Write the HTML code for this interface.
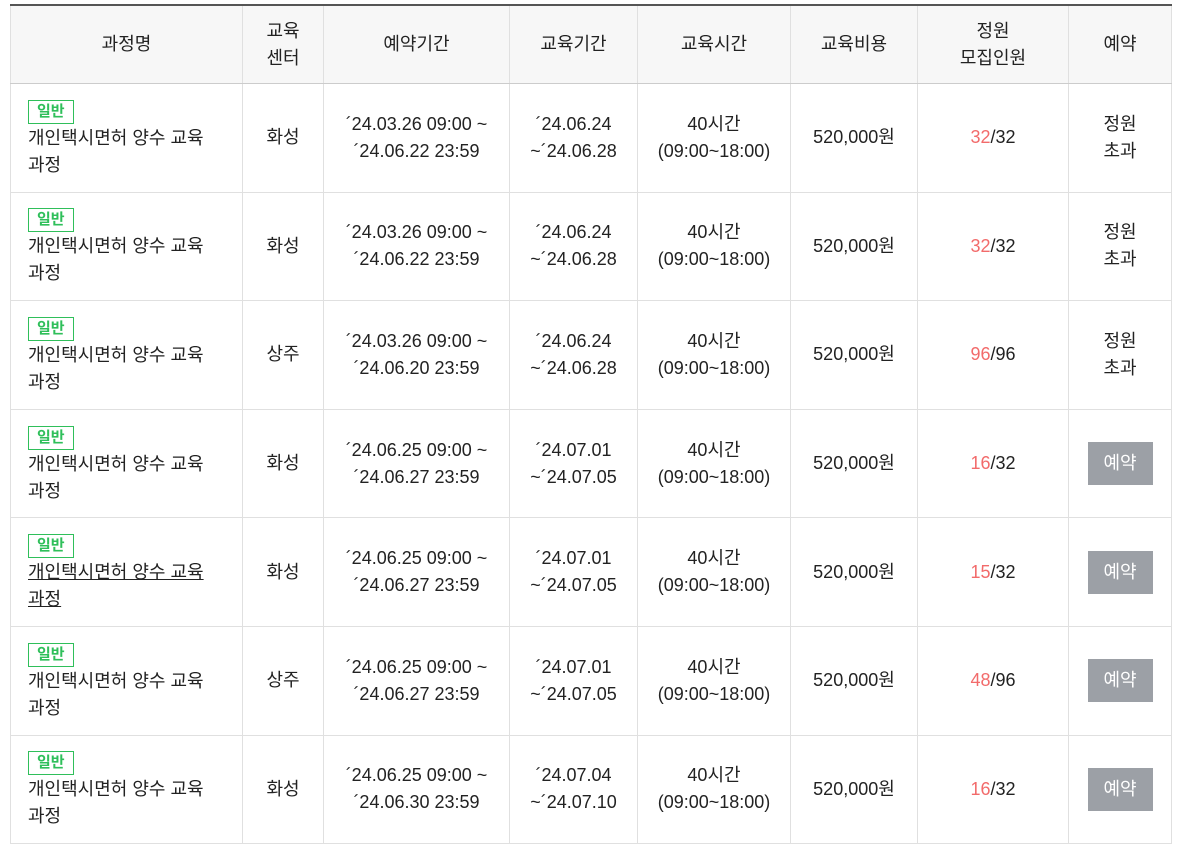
<!DOCTYPE html><html><head><meta charset="utf-8"><style>
body{margin:0;background:#fff;font-family:"Liberation Sans","Noto Sans CJK KR",sans-serif;color:#222;}
table{position:absolute;left:10px;top:4px;border-collapse:collapse;table-layout:fixed;width:1161px;font-size:18px;line-height:27px;}
th,td{border:1px solid #e0e0e0;text-align:center;vertical-align:middle;padding:0;}
tr.h th{border-top:2px solid #555;background:#f7f7f7;font-weight:normal;height:77px;border-bottom:1px solid #ccc;}
tr.d{height:108.6px;}
td.n{text-align:left;padding-left:17px;}
.b{display:inline-block;border:1px solid #2fbf5a;color:#2fbf5a;font-weight:bold;font-size:15px;line-height:22px;padding:0 8px;margin-bottom:1px;}
.r{color:#f26b6b}
.btn{display:inline-block;width:65px;height:43px;line-height:43px;background:#9ca0a6;color:#fff;}
</style></head><body>
<table>
<colgroup><col style="width:232px"><col style="width:81px"><col style="width:186px"><col style="width:128px"><col style="width:153px"><col style="width:127px"><col style="width:151px"><col style="width:103px"></colgroup>
<tr class="h"><th>과정명</th><th>교육<br>센터</th><th>예약기간</th><th>교육기간</th><th>교육시간</th><th>교육비용</th><th>정원<br>모집인원</th><th>예약</th></tr>
<tr class="d"><td class="n"><span class="b">일반</span><br>개인택시면허 양수 교육<br>과정</td><td>화성</td><td>´24.03.26 09:00 ~<br>´24.06.22 23:59</td><td>´24.06.24<br>~´24.06.28</td><td>40시간<br>(09:00~18:00)</td><td>520,000원</td><td><span class="r">32</span>/32</td><td>정원<br>초과</td></tr>
<tr class="d"><td class="n"><span class="b">일반</span><br>개인택시면허 양수 교육<br>과정</td><td>화성</td><td>´24.03.26 09:00 ~<br>´24.06.22 23:59</td><td>´24.06.24<br>~´24.06.28</td><td>40시간<br>(09:00~18:00)</td><td>520,000원</td><td><span class="r">32</span>/32</td><td>정원<br>초과</td></tr>
<tr class="d"><td class="n"><span class="b">일반</span><br>개인택시면허 양수 교육<br>과정</td><td>상주</td><td>´24.03.26 09:00 ~<br>´24.06.20 23:59</td><td>´24.06.24<br>~´24.06.28</td><td>40시간<br>(09:00~18:00)</td><td>520,000원</td><td><span class="r">96</span>/96</td><td>정원<br>초과</td></tr>
<tr class="d"><td class="n"><span class="b">일반</span><br>개인택시면허 양수 교육<br>과정</td><td>화성</td><td>´24.06.25 09:00 ~<br>´24.06.27 23:59</td><td>´24.07.01<br>~´24.07.05</td><td>40시간<br>(09:00~18:00)</td><td>520,000원</td><td><span class="r">16</span>/32</td><td><span class="btn">예약</span></td></tr>
<tr class="d"><td class="n"><span class="b">일반</span><br><u>개인택시면허 양수 교육<br>과정</u></td><td>화성</td><td>´24.06.25 09:00 ~<br>´24.06.27 23:59</td><td>´24.07.01<br>~´24.07.05</td><td>40시간<br>(09:00~18:00)</td><td>520,000원</td><td><span class="r">15</span>/32</td><td><span class="btn">예약</span></td></tr>
<tr class="d"><td class="n"><span class="b">일반</span><br>개인택시면허 양수 교육<br>과정</td><td>상주</td><td>´24.06.25 09:00 ~<br>´24.06.27 23:59</td><td>´24.07.01<br>~´24.07.05</td><td>40시간<br>(09:00~18:00)</td><td>520,000원</td><td><span class="r">48</span>/96</td><td><span class="btn">예약</span></td></tr>
<tr class="d"><td class="n"><span class="b">일반</span><br>개인택시면허 양수 교육<br>과정</td><td>화성</td><td>´24.06.25 09:00 ~<br>´24.06.30 23:59</td><td>´24.07.04<br>~´24.07.10</td><td>40시간<br>(09:00~18:00)</td><td>520,000원</td><td><span class="r">16</span>/32</td><td><span class="btn">예약</span></td></tr>
</table>
</body></html>
